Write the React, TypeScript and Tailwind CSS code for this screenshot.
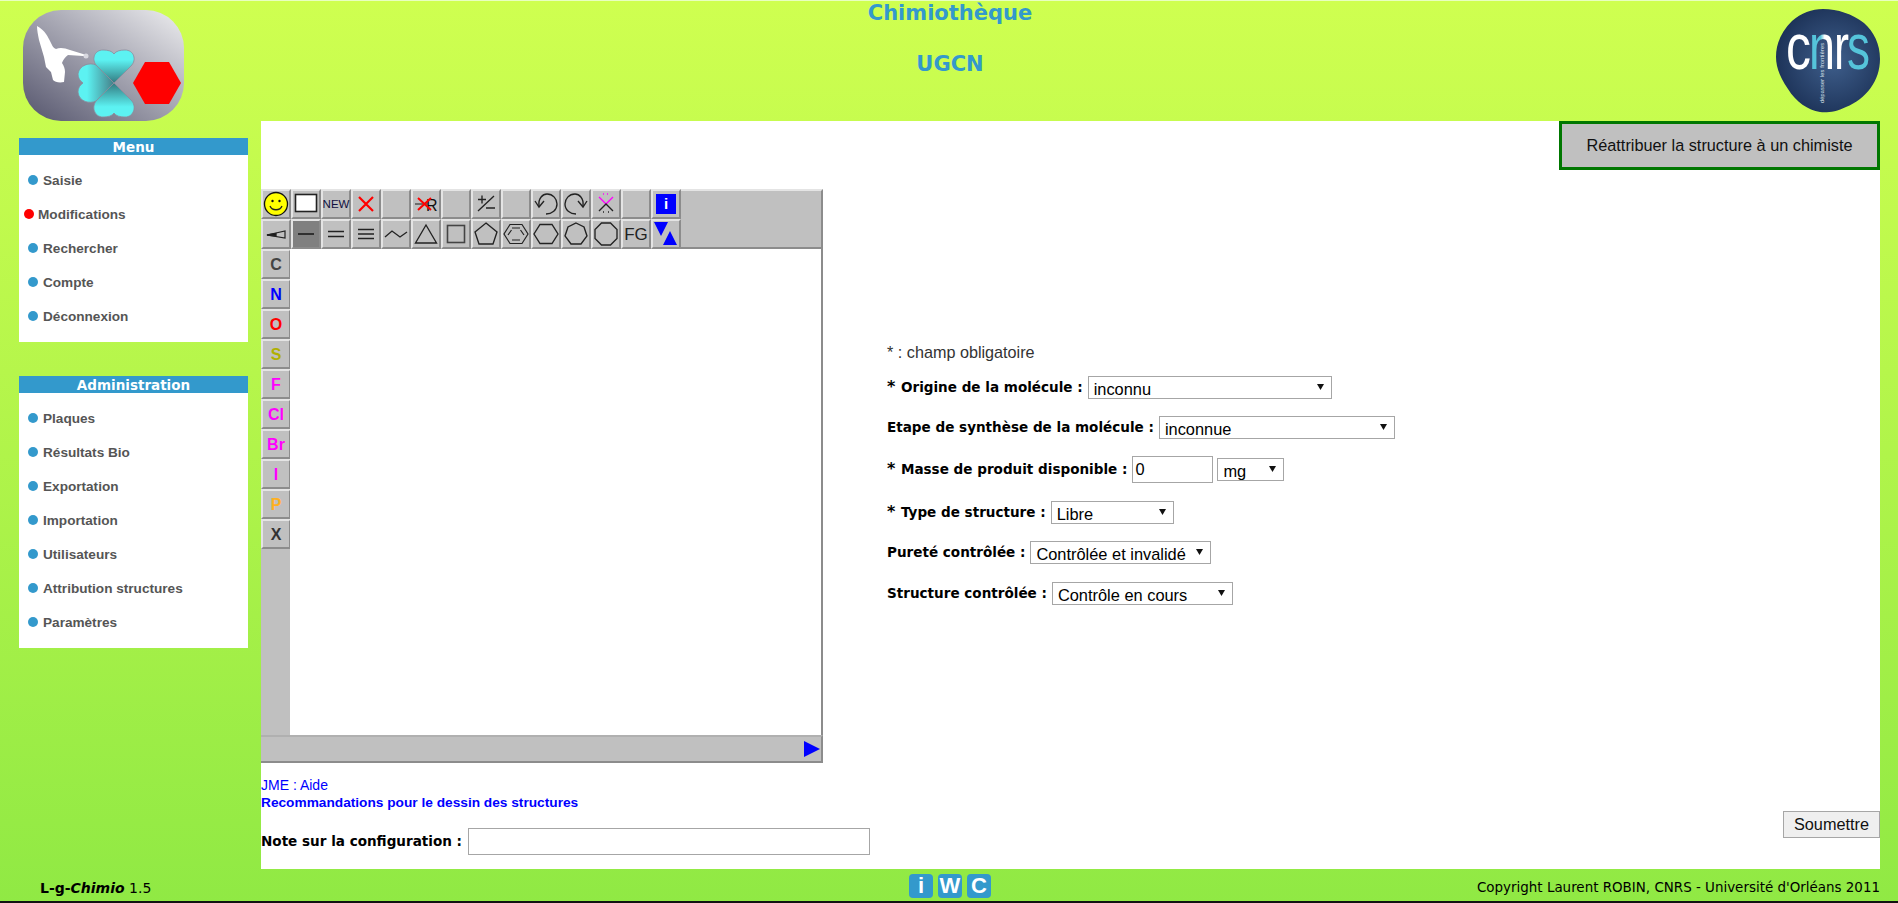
import React from 'react';

const verdana = "font-['DejaVu_Sans',sans-serif]";

const Logo = () => (
  <svg width="161" height="111" viewBox="23 10 161 111" className="block">
    <defs>
      <linearGradient id="logoBg" x1="0" y1="1" x2="1" y2="0">
        <stop offset="0" stopColor="#54546c" />
        <stop offset="1" stopColor="#eeeef0" />
      </linearGradient>
      <linearGradient id="petalT" x1="0" y1="0" x2="0" y2="1">
        <stop offset="0.3" stopColor="#5cf2f2" />
        <stop offset="1" stopColor="#347a80" />
      </linearGradient>
      <linearGradient id="petalB" x1="0" y1="1" x2="0" y2="0">
        <stop offset="0.3" stopColor="#5cf2f2" />
        <stop offset="1" stopColor="#347a80" />
      </linearGradient>
      <linearGradient id="petalL" x1="0" y1="0" x2="1" y2="0">
        <stop offset="0.25" stopColor="#5cf2f2" />
        <stop offset="1" stopColor="#457f88" />
      </linearGradient>
    </defs>
    <rect x="23" y="10" width="161" height="111" rx="38" fill="url(#logoBg)" />
    <path d="M37 26 C41 28 44 31 46 34 C48 37 49 39 50 41 C52 45 53 48 56 49 C60 47 65 48 70 50 L83 54 L88 56 L83 56 L68 55 C65 57 63 60 62 63 C64 66 65 69 65 72 L64 82 C59 83 55 82 53 80 L51 72 L46 67 L44 57 L39 40 C38 35 37 30 37 26 Z" fill="#fff" />
    <circle cx="86" cy="56" r="2.5" fill="#d8d8e0" />
    <g stroke="#8c8c9c" strokeWidth="0.8">
      <path d="M114 83 L97 66 C91 60 94 50 103 50 C108 50 112 51 114 54 C116 51 120 50 125 50 C134 50 137 60 131 66 Z" fill="url(#petalT)" />
      <path d="M114 83 L97 100 C91 106 94 117 103 117 C108 117 112 116 114 113 C116 116 120 117 125 117 C134 117 137 106 131 100 Z" fill="url(#petalB)" />
      <path d="M114 83 L96 101 C90 104 79 102 78 92 C78 88 80 85 83 83 C80 81 78 78 78 74 C79 65 90 62 96 65 Z" fill="url(#petalL)" />
    </g>
    <polygon points="133,83 145,62 169,62 181,83 169,104 145,104" fill="#ff0000" />
  </svg>
);

const CnrsLogo = () => (
  <svg width="104" height="104" viewBox="0 0 104 104" className="block">
    <defs>
      <radialGradient id="cnrsBg" cx="0.55" cy="0.5" r="0.6">
        <stop offset="0" stopColor="#3f5f8c" />
        <stop offset="1" stopColor="#1a2f54" />
      </radialGradient>
      <linearGradient id="cnrsN" x1="0" y1="0" x2="1" y2="0">
        <stop offset="0.45" stopColor="#55c4da" />
        <stop offset="0.6" stopColor="#fff" />
      </linearGradient>
    </defs>
    <path d="M47 0 C62 0 76 5 88 14 C98 23 104 35 104 50 C104 72 90 90 70 98 C60 103 50 104 44 103 C32 101 20 93 12 80 C4 68 0 58 0 48 C0 34 6 22 16 12 C25 4 36 0 47 0 Z" fill="url(#cnrsBg)" />
    <text x="10" y="60" fill="#fff" fontFamily="Liberation Sans" fontSize="64" textLength="25" lengthAdjust="spacingAndGlyphs">c</text>
    <text x="33" y="60" fill="url(#cnrsN)" fontFamily="Liberation Sans" fontSize="64" textLength="26" lengthAdjust="spacingAndGlyphs">n</text>
    <text x="58" y="60" fill="#fff" fontFamily="Liberation Sans" fontSize="64" textLength="15" lengthAdjust="spacingAndGlyphs">r</text>
    <text x="71" y="60" fill="#55c4da" fontFamily="Liberation Sans" fontSize="64" textLength="23" lengthAdjust="spacingAndGlyphs">s</text>
    <text transform="translate(48 94) rotate(-90)" fill="#dfe6ee" fontFamily="Liberation Sans" fontSize="5.5" textLength="60">dépasser les frontières</text>
  </svg>
);

const SideBox = ({ title, items, active }: { title: string; items: string[]; active?: string }) => (
  <div className="w-[229px] bg-white">
    <div className={`h-[17px] bg-[#3399cc] text-white text-center font-bold text-[13.5px] leading-[18px] ${verdana}`}>{title}</div>
    <ul className="pt-[9px] pb-[8px]">
      {items.map((item) => (
        <li key={item} className={`h-[34px] pt-[1px] flex items-center text-[13.6px] font-bold text-[#555] font-['Liberation_Sans',sans-serif] ${item === active ? 'pl-[5px] gap-[4px]' : 'pl-[9px] gap-[5px]'}`}>
          <span className={`w-[10px] h-[10px] -mt-[3px] rounded-full ${item === active ? 'bg-[#ff0000]' : 'bg-[#3399cc]'}`} />
          {item}
        </li>
      ))}
    </ul>
  </div>
);

const Cell = ({ children, selected }: { children?: React.ReactNode; selected?: boolean }) => (
  <div className={`w-[30px] h-[30px] flex items-center justify-center border-2 border-t-[#e4e4e4] border-l-[#e4e4e4] border-b-[#8c8c8c] border-r-[#8c8c8c] ${selected ? 'bg-[#808080]' : 'bg-[#c0c0c0]'}`}>
    {children}
  </div>
);

const Ico = ({ children }: { children: React.ReactNode }) => (
  <svg width="26" height="26" viewBox="0 0 26 26" fill="none" stroke="#222" strokeWidth="1.35" className="block shrink-0">
    {children}
  </svg>
);

const row1: React.ReactNode[] = [
  <Ico><circle cx="13" cy="13" r="11.5" fill="#ffff00" stroke="#111" strokeWidth="1.3" /><circle cx="9.5" cy="10" r="1.2" fill="#111" stroke="none" /><circle cx="16.5" cy="10" r="1.2" fill="#111" stroke="none" /><path d="M7 15 C9 20 17 20 19 15" /></Ico>,
  <Ico><rect x="2.5" y="3.5" width="21" height="17" fill="#fff" stroke="#222" strokeWidth="1.6" /></Ico>,
  <span className="pt-[2px] text-[11.5px] text-[#101040] font-['Liberation_Sans',sans-serif] leading-none">NEW</span>,
  <Ico><path d="M6 6 L20 20 M20 6 L6 20" stroke="#ff0000" strokeWidth="2.2" /></Ico>,
  null,
  <Ico><path d="M2 13 H14" stroke="#444" /><text x="13" y="20" fill="#111" stroke="none" fontFamily="Liberation Sans" fontSize="16">R</text><path d="M5 7 L18 19 M18 7 L5 19" stroke="#ff0000" strokeWidth="2" /></Ico>,
  null,
  <Ico><path d="M5 8.5 H13 M9 4.5 V12.5 M13 17 H22 M5 20 L21 5" /></Ico>,
  null,
  <Ico><path d="M6 15 C5 7 10 3 14 3 C20 3 24 8 24 13 C24 19 19 23 13 23" /><path d="M2 10 L6 16 L11 10" /></Ico>,
  <Ico><path d="M20 15 C21 7 16 3 12 3 C6 3 2 8 2 13 C2 19 7 23 13 23" /><path d="M24 10 L20 16 L15 10" /></Ico>,
  <Ico><path d="M6 6 L13 13 L20 6" stroke="#ff00ff" /><path d="M10 3 h1 M14 3 h1" stroke="#ff00ff" /><path d="M6 20 L13 13 L20 20" /><path d="M10 21 h1 M15 21 h1" /></Ico>,
  null,
  <span className="w-[20px] h-[20px] bg-[#0000ff] text-white text-center font-bold text-[15px] leading-[20px] font-['Liberation_Sans',sans-serif]">i</span>,
];

const row2: React.ReactNode[] = [
  <Ico><path d="M4 14 L22 10 V17 Z" strokeWidth="1.2" /><path d="M4 14 L13 12.5 V15 Z" fill="#111" /></Ico>,
  <Ico><path d="M5 13 H21" strokeWidth="1.7" /></Ico>,
  <Ico><path d="M5 10.5 H21 M5 15.5 H21" strokeWidth="1.5" /></Ico>,
  <Ico><path d="M5 8.5 H21 M5 13 H21 M5 17.5 H21" strokeWidth="1.5" /></Ico>,
  <Ico><path d="M2 16 L9 10 L17 16 L24 11" /></Ico>,
  <Ico><path d="M13 4 L23.5 22 H2.5 Z" /></Ico>,
  <Ico><rect x="4.5" y="4.5" width="17" height="17" stroke="#444" strokeWidth="1.6" /></Ico>,
  <Ico><path d="M13 2 L24 11 L20 23 H6 L2 11 Z" /></Ico>,
  <Ico><path d="M7 3.5 H19 L25 13 L19 22.5 H7 L1 13 Z M9 7 H17 M5 14 L8.5 9 M9 19 H17 M21 14 L17.5 9" strokeWidth="1.2" /></Ico>,
  <Ico><path d="M7 3.5 H19 L25 13 L19 22.5 H7 L1 13 Z" /></Ico>,
  <Ico><path d="M13 2 L21 6 L24 15 L18 23 H8 L2 15 L5 6 Z" /></Ico>,
  <Ico><path d="M8.5 2 H17.5 L24 8.5 V17.5 L17.5 24 H8.5 L2 17.5 V8.5 Z" /></Ico>,
  <span className="text-[17px] text-[#222] font-['Liberation_Sans',sans-serif] leading-none">FG</span>,
  <Ico><path d="M1 1 H15 L8 15 Z M17 10 L24 24 H10 Z" fill="#0000ff" stroke="none" /></Ico>,
];

const atoms: [string, string][] = [
  ['C', 'text-[#444]'],
  ['N', 'text-[#0000ff]'],
  ['O', 'text-[#ff0000]'],
  ['S', 'text-[#b0b000]'],
  ['F', 'text-[#ff00ff]'],
  ['Cl', 'text-[#ff00ff]'],
  ['Br', 'text-[#ff00ff]'],
  ['I', 'text-[#ff00ff]'],
  ['P', 'text-[#ffb020]'],
  ['X', 'text-[#333]'],
];

const Editor = () => (
  <div className="w-[562px] h-[574px] shrink-0 flex flex-col bg-[#c0c0c0]">
    <div className="flex h-[30px]">
      {row1.map((c, i) => <Cell key={i}>{c}</Cell>)}
      <div className="flex-1 border-t-2 border-t-[#e4e4e4] border-r-2 border-r-[#8c8c8c]" />
    </div>
    <div className="flex h-[30px]">
      {row2.map((c, i) => <Cell key={i} selected={i === 1}>{c}</Cell>)}
      <div className="flex-1 border-b-2 border-b-[#8c8c8c] border-r-2 border-r-[#8c8c8c]" />
    </div>
    <div className="flex flex-1 min-h-0">
      <div className="w-[29px] shrink-0">
        {atoms.map(([a, color]) => (
          <Cell key={a}>
            <span className={`pt-[2px] font-bold text-[16px] leading-none font-['Liberation_Sans',sans-serif] ${color}`}>{a}</span>
          </Cell>
        ))}
      </div>
      <div className="flex-1 bg-white border-r-2 border-r-[#8c8c8c]" />
    </div>
    <div className="h-[28px] flex items-center justify-end pr-[1px] border-t-2 border-t-[#b0b0b0] border-b-2 border-b-[#8c8c8c] border-r-2 border-r-[#8c8c8c]">
      <svg width="16" height="16" viewBox="0 0 16 16" className="block"><path d="M0 0 L16 8 L0 16 Z" fill="#0000ff" /></svg>
    </div>
  </div>
);

const Select = ({ value, width }: { value: string; width: string }) => (
  <div className={`relative h-[23px] ${width}`}>
    <select
      defaultValue={value}
      className="appearance-none w-full h-full bg-white border border-[#a6a6a6] pl-[5px] text-[16.4px] text-black font-['Liberation_Sans',sans-serif] outline-none rounded-none"
    >
      <option>{value}</option>
    </select>
    <svg width="7" height="6" viewBox="0 0 7 6" className="absolute right-[8px] top-[8px]"><path d="M0 0 H7 L3.5 6 Z" fill="#111" /></svg>
  </div>
);

const Label = ({ star, children }: { star?: boolean; children: React.ReactNode }) => (
  <span className={`text-[13.55px] font-bold text-black whitespace-pre ${verdana}`}>
    {star && <span className="text-[16px] leading-none">* </span>}
    {children}
  </span>
);

const Form = () => (
  <div className="flex flex-col pt-[154px] pl-[64px]">
    <div className="h-[18px] flex items-center text-[16.2px] text-[#333] font-['Liberation_Sans',sans-serif]">* : champ obligatoire</div>
    <div className="mt-[15px] flex items-center gap-[5px] h-[23px]">
      <Label star>Origine de la molécule :</Label>
      <Select value="inconnu" width="w-[244px]" />
    </div>
    <div className="mt-[17px] flex items-center gap-[5px] h-[23px]">
      <Label>Etape de synthèse de la molécule :</Label>
      <Select value="inconnue" width="w-[236px]" />
    </div>
    <div className="mt-[17px] flex items-center h-[27px]">
      <Label star>Masse de produit disponible :</Label>
      <input
        defaultValue="0"
        className="ml-[5px] w-[81px] h-[27px] bg-white border border-[#a6a6a6] px-[2px] text-[16.4px] text-black font-['Liberation_Sans',sans-serif] outline-none"
      />
      <div className="ml-[4px]"><Select value="mg" width="w-[67px]" /></div>
    </div>
    <div className="mt-[18px] flex items-center gap-[5px] h-[23px]">
      <Label star>Type de structure :</Label>
      <Select value="Libre" width="w-[123px]" />
    </div>
    <div className="mt-[17px] flex items-center gap-[5px] h-[23px]">
      <Label>Pureté contrôlée :</Label>
      <Select value="Contrôlée et invalidé" width="w-[181px]" />
    </div>
    <div className="mt-[18px] flex items-center gap-[5px] h-[23px]">
      <Label>Structure contrôlée :</Label>
      <Select value="Contrôle en cours" width="w-[181px]" />
    </div>
  </div>
);

const IwcBadge = ({ letter }: { letter: string }) => (
  <span className="w-[24px] h-[24px] rounded-[4px] bg-[#3399cc] text-white text-center font-bold text-[22px] leading-[24px] font-['Liberation_Sans',sans-serif]">
    {letter}
  </span>
);

export default function App() {
  return (
    <div className={`w-[1898px] h-[903px] overflow-hidden flex flex-col bg-gradient-to-b from-[#cfff50] to-[#90e944] ${verdana}`}>
      <header className="h-[121px] shrink-0 flex border-t border-t-[#e8ffc0]">
        <div className="w-[261px] shrink-0 pl-[23px] pt-[9px]">
          <Logo />
        </div>
        <div className="flex-1 flex flex-col items-center pl-[20px] text-[#3399cc] font-bold text-[21px] leading-[24px]">
          <div className="mt-0">Chimiothèque</div>
          <div className="mt-[27px]">UGCN</div>
        </div>
        <div className="w-[279px] shrink-0 flex justify-end pr-[18px] pt-[8px]">
          <CnrsLogo />
        </div>
      </header>

      <div className="h-[748px] shrink-0 flex">
        <aside className="w-[261px] shrink-0 pl-[19px] pt-[17px] flex flex-col gap-[34px]">
          <SideBox title="Menu" active="Modifications" items={['Saisie', 'Modifications', 'Rechercher', 'Compte', 'Déconnexion']} />
          <SideBox
            title="Administration"
            items={['Plaques', 'Résultats Bio', 'Exportation', 'Importation', 'Utilisateurs', 'Attribution structures', 'Paramètres']}
          />
        </aside>

        <main className="w-[1619px] shrink-0 bg-white flex flex-col">
          <div className="flex justify-end h-[68px] shrink-0">
            <button className="w-[321px] h-[49px] bg-[#c0c0c0] border-[3px] border-[#007700] text-[16.3px] text-[#111] font-['Liberation_Sans',sans-serif]">
              Réattribuer la structure à un chimiste
            </button>
          </div>
          <div className="flex h-[574px] shrink-0">
            <Editor />
            <Form />
          </div>
          <div className="flex-1 flex justify-between font-['Liberation_Sans',sans-serif]">
            <div className="flex flex-col">
              <a href="#" className="mt-[13px] text-[14px] leading-[18px] text-[#0000ff]">JME : Aide</a>
              <a href="#" className="text-[13.7px] leading-[18px] font-bold text-[#0000ff]">Recommandations pour le dessin des structures</a>
              <div className="mt-[16px] flex items-center gap-[6px]">
                <Label>Note sur la configuration :</Label>
                <input className="w-[402px] h-[27px] bg-white border border-[#a6a6a6] outline-none" />
              </div>
            </div>
            <button className="mt-[48px] w-[97px] h-[27px] bg-[#efefef] border border-[#a6a6a6] text-[16.3px] text-[#111]">Soumettre</button>
          </div>
        </main>
      </div>

      <footer className="flex-1 flex items-center border-b-2 border-b-[#111] text-black">
        <div className="w-[909px] pl-[40px] pt-[7px] text-[14px]">
          <b>L-g-<i>Chimio</i></b> 1.5
        </div>
        <div className="flex gap-[5px] pt-[2px]">
          <IwcBadge letter="i" />
          <IwcBadge letter="W" />
          <IwcBadge letter="C" />
        </div>
        <div className="flex-1 text-right pr-[18px] pt-[7px] text-[13.45px]">Copyright Laurent ROBIN, CNRS - Université d'Orléans 2011</div>
      </footer>
    </div>
  );
}
